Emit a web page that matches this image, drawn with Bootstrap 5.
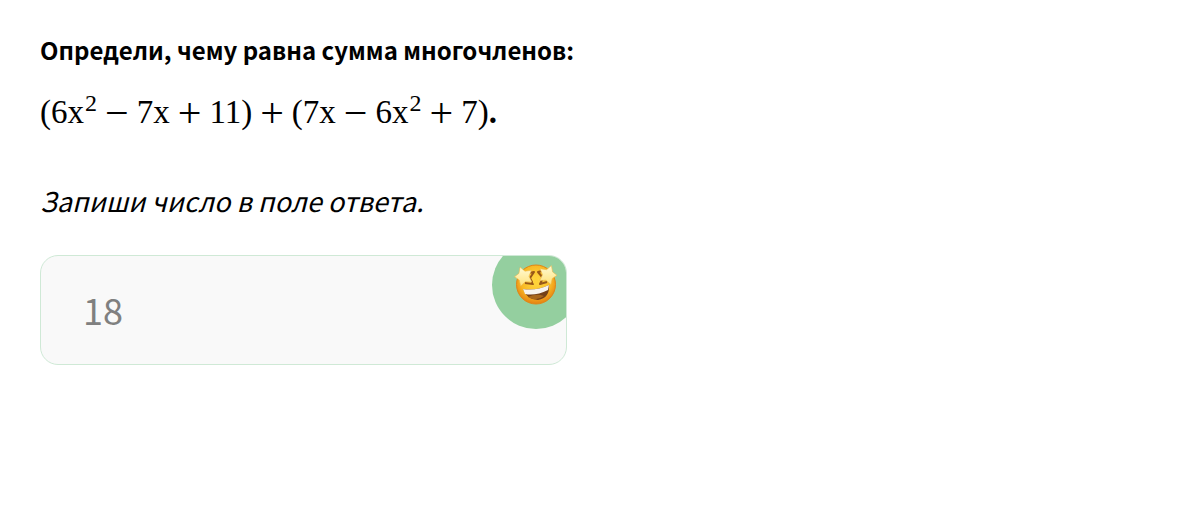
<!DOCTYPE html>
<html lang="ru">
<head>
<meta charset="utf-8">
<meta name="viewport" content="width=device-width, initial-scale=1">
<title>Сумма многочленов</title>
<link href="https://cdn.jsdelivr.net/npm/bootstrap@5.3.0/dist/css/bootstrap.min.css" rel="stylesheet">
<style>
  body { font-family: "Noto Sans CJK JP", "Noto Sans", sans-serif; color: #000; background: #fff; }
  .task { max-width: 607px; padding: 32px 40px; }
  .task-title { font-size: 24px; line-height: 36px; font-weight: 700; }
  .formula { font-family: "Liberation Serif", serif; font-size: 33px; line-height: 40px; margin-top: 24px; }
  .formula sup { font-size: 24px; line-height: 0; top: 0; vertical-align: 12px; margin-left: 1px; }
  .sign { font-size: 42px; line-height: 0; vertical-align: -4px; margin: 0 8px; }
  .hint { font-size: 27px; line-height: 36px; margin-top: 51px; }
  .answer { margin-top: 36px; border: 1px solid #cfe9d6; border-radius: 18px; background: #f9f9f9; }
  .answer-input, .answer-input:focus { height: 108px; padding: 0 100px 2px 42px; font-size: 36px; color: #808080; background: transparent; box-shadow: none; }
  .reaction { width: 88px; height: 88px; top: -15px; right: -14px; background: #94cf9f; }
  .reaction svg { width: 44px; height: 44px; }
</style>
</head>
<body>
<main class="task">
  <h1 class="task-title mb-0 text-nowrap">Определи, чему равна сумма многочленов:</h1>
  <p class="formula mb-0 text-nowrap">(6x<sup>2</sup><span class="sign">−</span>7x<span class="sign">+</span>11)<span class="sign">+</span>(7x<span class="sign">−</span>6x<sup>2</sup><span class="sign">+</span>7)<b>.</b></p>
  <label for="answer" class="hint d-block fst-italic text-nowrap">Запиши число в поле ответа.</label>
  <div class="answer position-relative overflow-hidden">
    <input id="answer" type="text" class="answer-input form-control border-0 rounded-0" value="18" readonly>
    <div class="reaction position-absolute rounded-circle d-flex align-items-center justify-content-center">
      <svg viewBox="0 0 44 44" role="img" aria-label="Верно">
        <defs>
          <radialGradient id="face" cx=".5" cy=".4" r=".6"><stop offset="0" stop-color="#ffdc45"/><stop offset=".65" stop-color="#f9b823"/><stop offset="1" stop-color="#e58112"/></radialGradient>
          <linearGradient id="star" x1="0" y1="0" x2="0" y2="1"><stop offset="0" stop-color="#fffbd5"/><stop offset="1" stop-color="#ffe27a"/></linearGradient>
        </defs>
        <circle cx="22" cy="21.5" r="19.5" fill="url(#face)" stroke="#e08615"/>
        <path d="M9 26q13 2 26-4q1 13-11 15q-11 0-15-11z" fill="#754018"/>
        <path d="M9 26q13 2 26-4l-1 5q-12 6-23 4z" fill="#f7f3ef"/>
        <path d="M14 34q8-4 16-1q-8 6-16 1z" fill="#a8661d"/>
        <path d="M15 10l5-1-4 6 3 6-8-1M28 8l-4 1 5 6-3 6 7-2" stroke="#985818" stroke-width="2" fill="none" stroke-linejoin="round"/>
        <path d="M22 11l-3 9 3 2 3-2z" fill="#ffd238"/>
        <g fill="url(#star)" stroke="#ecb84e" stroke-width=".6" stroke-linejoin="round">
          <path id="star-eye" d="M6.1 4.1L11 8.2L17.4 7.3L15 13.3L17.8 19.1L11.4 18.7L6.7 23.1L5.2 16.9L.5 13.8L4.9 10.4Z"/>
          <use href="#star-eye" transform="translate(43.5 -1.5) scale(-1 1)"/>
        </g>
      </svg>
    </div>
  </div>
</main>
<script src="https://cdn.jsdelivr.net/npm/bootstrap@5.3.0/dist/js/bootstrap.bundle.min.js"></script>
</body>
</html>
